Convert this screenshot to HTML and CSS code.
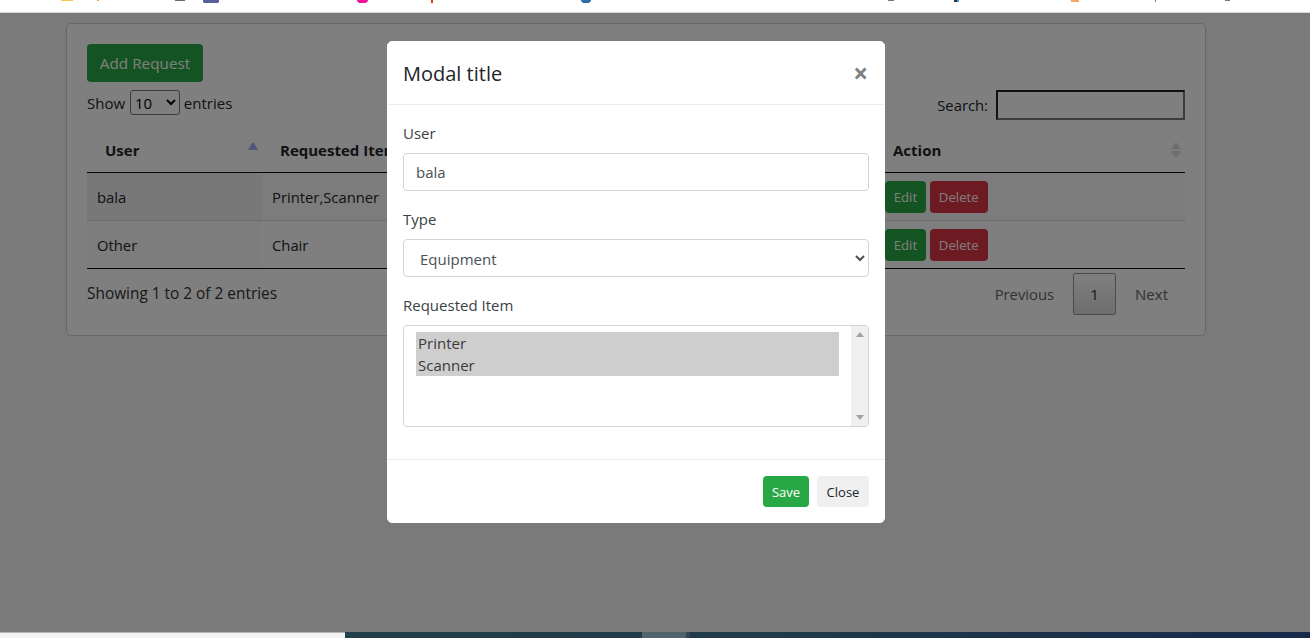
FILE: index.html
```html
<!DOCTYPE html>
<html lang="en">
<head>
    <meta charset="UTF-8">
    <meta name="viewport" content="width=device-width, initial-scale=1.0">
    <title>Requests</title>
    <link rel="stylesheet" href="styles.css">
</head>
<body>
    <div class="top-strip">
        <svg class="strip-icons" width="1310" height="12" viewBox="0 0 1310 12">
            <rect x="61" y="0" width="12" height="1" fill="#f2c94c"/>
            <rect x="97" y="0" width="2" height="1" fill="#e8a04a"/>
            <rect x="175" y="0" width="10" height="1" fill="#6b6b6b"/>
            <path d="M203 0h16v2l-1 1h-14l-1-1z" fill="#5a5f9e"/>
            <path d="M357 0h11v1l-2 2h-7l-2-2z" fill="#f0149c"/>
            <rect x="431" y="0" width="2" height="3" fill="#e8321e"/>
            <path d="M581 0h10v1l-2 2h-6l-2-2z" fill="#2f6da8"/>
            <rect x="888" y="0" width="6" height="1" fill="#777777"/>
            <rect x="954" y="0" width="3" height="2" fill="#333333"/>
            <rect x="957" y="0" width="2" height="2" fill="#3f9bd8"/>
            <rect x="1071" y="0" width="8" height="2" fill="#f6a468"/>
            <rect x="1155" y="0" width="1" height="2" fill="#5a86b0"/>
            <rect x="1225" y="0" width="5" height="1" fill="#777777"/>
        </svg>
    </div>

    <div class="stage">
        <div class="card">
            <button class="btn btn-add">Add Request</button>

            <div class="table-controls">
                <label class="length-label">
                    Show
                    <select class="length-select">
                        <option>10</option>
                        <option>25</option>
                        <option>50</option>
                    </select>
                    entries
                </label>
                <label class="search-label">
                    Search:
                    <input class="search-input" type="text">
                </label>
            </div>

            <table class="data-table">
                <colgroup>
                    <col class="col-user">
                    <col class="col-item">
                    <col class="col-type">
                    <col>
                </colgroup>
                <thead>
                    <tr>
                        <th>User<span class="sort sort-asc"></span></th>
                        <th>Requested Item</th>
                        <th>Type</th>
                        <th>Action<span class="sort sort-both"></span></th>
                    </tr>
                </thead>
                <tbody>
                    <tr class="odd">
                        <td class="sorted">bala</td>
                        <td>Printer,Scanner</td>
                        <td>Equipment</td>
                        <td>
                            <button class="btn btn-row btn-edit">Edit</button>
                            <button class="btn btn-row btn-delete">Delete</button>
                        </td>
                    </tr>
                    <tr>
                        <td class="sorted">Other</td>
                        <td>Chair</td>
                        <td>Furniture</td>
                        <td>
                            <button class="btn btn-row btn-edit">Edit</button>
                            <button class="btn btn-row btn-delete">Delete</button>
                        </td>
                    </tr>
                </tbody>
            </table>

            <div class="table-footer">
                <div class="table-info">Showing 1 to 2 of 2 entries</div>
                <div class="paging">
                    <a class="page-link page-prev">Previous</a>
                    <a class="page-link page-current">1</a>
                    <a class="page-link">Next</a>
                </div>
            </div>
        </div>

        <div class="backdrop">
            <div class="modal">
                <div class="modal-header">
                    <h5 class="modal-title">Modal title</h5>
                    <span class="modal-close">&times;</span>
                </div>
                <div class="modal-body">
                    <div class="form-group">
                        <label class="form-label">User</label>
                        <input class="form-control" type="text" value="bala">
                    </div>
                    <div class="form-group">
                        <label class="form-label">Type</label>
                        <select class="form-control form-select">
                            <option>Equipment</option>
                            <option>Furniture</option>
                        </select>
                    </div>
                    <div class="form-group">
                        <label class="form-label">Requested Item</label>
                        <div class="listbox">
                            <div class="listbox-options">
                                <div class="listbox-option">Printer</div>
                                <div class="listbox-option">Scanner</div>
                            </div>
                            <div class="listbox-scroll">
                                <span class="scroll-up"></span>
                                <span class="scroll-down"></span>
                            </div>
                        </div>
                    </div>
                </div>
                <div class="modal-footer">
                    <button class="btn btn-save">Save</button>
                    <button class="btn btn-close">Close</button>
                </div>
            </div>
        </div>
    </div>

    <div class="bottom-strip">
        <div class="strip-light"></div>
        <div class="strip-dark">
            <div class="strip-thumb"></div>
        </div>
    </div>
</body>
</html>
```

FILE: styles.css
```css
body, html {
    margin: 0;
    padding: 0;
    height: 100%;
    overflow: hidden;
}
body {
    display: flex;
    flex-direction: column;
    font-family: "Open Sans", "Noto Sans", Arial, sans-serif;
    font-size: 15px;
    color: #212529;
    background: #f5f5f5;
}
button, input, select {
    font-family: inherit;
}
.top-strip {
    flex: 0 0 12px;
    background: #ffffff;
    border-bottom: 1px solid #d8d8d8;
}
.strip-icons {
    display: block;
}
.stage {
    position: relative;
    flex: 1;
    padding: 10px 104px 0 66px;
}
.card {
    background: #ffffff;
    border: 1px solid #cfcfcf;
    border-radius: 5px;
    padding: 20px;
    height: 313px;
    box-sizing: border-box;
}
.btn {
    border: 1px solid transparent;
    border-radius: 4px;
    cursor: pointer;
    color: #ffffff;
    display: inline-block;
}
.btn-add {
    width: 116px;
    height: 38px;
    padding: 0;
    font-size: 15.3px;
    background: #28a745;
    display: block;
}
.table-controls {
    display: flex;
    justify-content: space-between;
    align-items: flex-start;
    margin-top: 8px;
    height: 38px;
}
.length-select {
    width: 50px;
    height: 25px;
    margin: 0 0 0 1px;
    font-size: 15px;
    border: 1px solid #767676;
    border-radius: 3px;
    background: #ffffff;
    padding: 0;
}
.search-label {
    display: flex;
    align-items: center;
    gap: 8px;
    font-size: 14.8px;
}
.search-input {
    width: 189px;
    height: 30px;
    box-sizing: border-box;
    border-style: solid;
    border-width: 2px;
    border-color: #222222 #767676 #767676 #222222;
    background: #ffffff;
    margin: 0;
    padding: 0;
}
.data-table {
    width: 100%;
    table-layout: fixed;
    border-collapse: collapse;
    border-bottom: 1px solid #111111;
}
.col-user {
    width: 175px;
}
.col-item {
    width: 300px;
}
.col-type {
    width: 313px;
}
.data-table th {
    position: relative;
    height: 44px;
    padding: 0 18px;
    text-align: left;
    font-weight: 700;
    white-space: nowrap;
    overflow: hidden;
    border-bottom: 1px solid #111111;
}
.data-table td {
    height: 47px;
    padding: 0 10px;
    font-size: 14.8px;
    border-top: 1px solid #dddddd;
}
.data-table tbody tr:first-child td {
    border-top: none;
}
.odd td {
    background: #f9f9f9;
}
.odd td.sorted {
    background: #f1f1f1;
}
td.sorted {
    background: #fafafa;
}
.sort {
    position: absolute;
    right: 4px;
    top: 15px;
    width: 10px;
}
.sort-asc::before {
    content: "";
    display: block;
    margin: 0 auto;
    border-left: 4.5px solid transparent;
    border-right: 4.5px solid transparent;
    border-bottom: 7px solid #a4a4ff;
}
.sort-both::before,
.sort-both::after {
    content: "";
    display: block;
    margin: 0 auto;
    border-left: 4px solid transparent;
    border-right: 4px solid transparent;
}
.sort-both::before {
    border-bottom: 6px solid #dddddd;
    margin-bottom: 2px;
}
.sort-both::after {
    border-top: 6px solid #dddddd;
}
.btn-row {
    height: 32px;
    padding: 0 7.7px;
    font-size: 13.2px;
}
.btn-edit {
    background: #28a745;
}
.btn-delete {
    padding: 0 8.2px;
    background: #dc3545;
}
.table-footer {
    display: flex;
    justify-content: space-between;
    align-items: flex-start;
    margin-top: 4px;
}
.table-info {
    padding-top: 10px;
    font-size: 15.4px;
    color: #333333;
}
.paging {
    display: flex;
    align-items: center;
}
.page-link {
    padding: 0 17px 0 18px;
    color: #666666;
    height: 42px;
    line-height: 42px;
}
.page-prev {
    font-size: 14.8px;
}
.page-current {
    width: 43px;
    padding: 0;
    margin: 0 1px 0 2px;
    box-sizing: border-box;
    text-align: center;
    line-height: 40px;
    color: #333333;
    border: 1px solid #979797;
    border-radius: 2px;
    background: linear-gradient(to bottom, #ffffff, #dcdcdc);
}

/* dimmed layer with the dialog on top */
.backdrop {
    position: absolute;
    inset: 0;
    background: rgba(0, 0, 0, 0.5);
    display: flex;
    align-items: flex-start;
    padding: 28px 0 0 387px;
}
.modal {
    flex: 0 0 498px;
    box-sizing: border-box;
    background: #ffffff;
    border: 1px solid #ffffff;
    border-radius: 5px;
    overflow: hidden;
}
.modal-header {
    display: flex;
    justify-content: space-between;
    align-items: center;
    height: 63px;
    box-sizing: border-box;
    padding: 0 15px;
    border-bottom: 1px solid #e9ecef;
}
.modal-title {
    margin: 0;
    font-size: 20px;
    font-weight: 500;
    color: #212529;
}
.modal-close {
    font-size: 26px;
    font-weight: 700;
    color: #808080;
    line-height: 1;
    margin-right: 1px;
}
.modal-body {
    padding: 18px 15px 0;
    height: 355px;
    box-sizing: border-box;
    border-bottom: 1px solid #e9ecef;
}
.form-group {
    margin-bottom: 18px;
}
.form-label {
    display: block;
    height: 22px;
    line-height: 20px;
    margin-bottom: 8px;
    color: #3a3f44;
    font-size: 15px;
}
.form-control {
    display: block;
    width: 100%;
    height: 38px;
    box-sizing: border-box;
    padding: 0 12px;
    font-size: 15px;
    color: #495057;
    background: #ffffff;
    border: 1px solid #ced4da;
    border-radius: 4px;
}
.form-select {
    padding-top: 2px;
}
.listbox {
    display: flex;
    height: 102px;
    box-sizing: border-box;
    border: 1px solid #ced4da;
    border-radius: 4px;
    overflow: hidden;
}
.listbox-options {
    flex: 1;
    padding: 6px 12px 0;
}
.listbox-option {
    height: 22px;
    line-height: 22px;
    padding-left: 2px;
    background: #cecece;
    color: #3a3a3a;
    font-size: 15px;
}
.listbox-scroll {
    width: 17px;
    background: #f0f0f0;
    display: flex;
    flex-direction: column;
    justify-content: space-between;
    align-items: center;
    padding: 6px 0;
    box-sizing: border-box;
}
.scroll-up {
    border-left: 4px solid transparent;
    border-right: 4px solid transparent;
    border-bottom: 5px solid #a3a3a3;
}
.scroll-down {
    border-left: 4px solid transparent;
    border-right: 4px solid transparent;
    border-top: 5px solid #a3a3a3;
}
.modal-footer {
    display: flex;
    justify-content: flex-end;
    gap: 8px;
    padding: 16px 15px 15px;
}
.btn-save,
.btn-close {
    height: 31px;
    padding: 0;
    font-size: 13px;
}
.btn-save {
    width: 46px;
    background: #28a745;
    font-weight: 500;
}
.btn-close {
    width: 52px;
    background: #efefef;
    color: #212529;
}
.bottom-strip {
    flex: 0 0 6px;
    display: flex;
}
.strip-light {
    width: 345px;
    background: #f2f2f2;
    border-top: 1px solid #b5b5b5;
    box-sizing: border-box;
}
.strip-dark {
    flex: 1;
    padding-left: 297px;
    background: linear-gradient(to right, #21404a, #1f3a4a 45%, #172a4a);
}
.strip-thumb {
    width: 44px;
    height: 100%;
    background: #52656d;
    border-right: 4px solid #3a4650;
}
```
